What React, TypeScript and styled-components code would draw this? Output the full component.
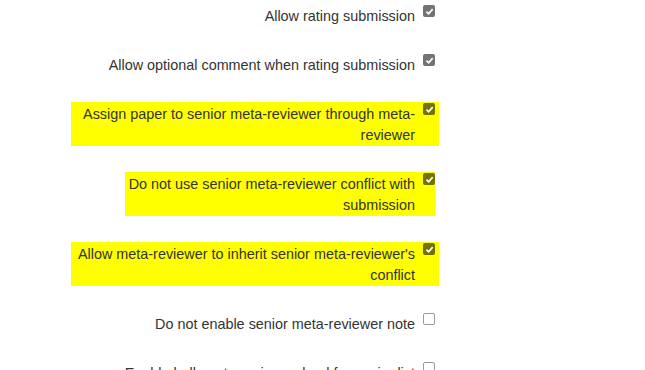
import React from 'react';
import styled, { createGlobalStyle } from 'styled-components';

const GlobalStyle = createGlobalStyle`
  body {
    margin: 0;
    background: #fff;
    font-family: 'Liberation Sans', Arial, sans-serif;
  }
`;

const Settings = styled.div`
  width: 439px;
  padding-top: 4px;
  display: flex;
  flex-direction: column;
  align-items: flex-end;
  gap: 26px;
`;

const Field = styled.label<{ $highlight?: boolean; $tight?: boolean }>`
  display: flex;
  align-items: flex-start;
  max-width: 364px;
  padding-right: ${(p) => (p.$tight ? '0' : '4px')};
  margin-right: ${(p) => (p.$tight ? '4px' : '0')};
  background: ${(p) => (p.$highlight ? '#ffff00' : 'transparent')};
`;

const Label = styled.span`
  padding-top: 2px;
  font-size: 14.4px;
  line-height: 21px;
  color: #333;
  text-align: right;
`;

const Box = styled.span<{ $checked?: boolean }>`
  flex: none;
  width: 12px;
  height: 12px;
  margin: 1px 0 0 8px;
  box-sizing: border-box;
  border-radius: 2px;
  display: flex;
  align-items: center;
  justify-content: center;
  background: ${(p) => (p.$checked ? 'rgba(0, 0, 0, 0.55)' : '#fff')};
  border: 1px solid ${(p) => (p.$checked ? 'transparent' : '#9a9a9a')};
`;

const CheckMark = () => (
  <svg width="9" height="9" viewBox="0 0 10 10">
    <path d="M1.6 5.2 L4 7.5 L8.5 2.4" fill="none" stroke="#fff" strokeWidth="1.9" />
  </svg>
);

type Option = { text: string; checked: boolean; highlight?: boolean; tight?: boolean };

const options: Option[] = [
  { text: 'Allow rating submission', checked: true },
  { text: 'Allow optional comment when rating submission', checked: true },
  { text: 'Assign paper to senior meta-reviewer through meta-reviewer', checked: true, highlight: true },
  { text: 'Do not use senior meta-reviewer conflict with submission', checked: true, highlight: true, tight: true },
  { text: "Allow meta-reviewer to inherit senior meta-reviewer's conflict", checked: true, highlight: true },
  { text: 'Do not enable senior meta-reviewer note', checked: false },
  { text: 'Enable bulk meta-review upload for senior list', checked: false },
];

const App: React.FC = () => {
  return (
    <>
      <GlobalStyle />
      <Settings>
        {options.map((o) => (
          <Field key={o.text} $highlight={o.highlight} $tight={o.tight} style={o.tight ? { width: 310 } : undefined}>
            <Label>{o.text}</Label>
            <Box $checked={o.checked}>{o.checked && <CheckMark />}</Box>
          </Field>
        ))}
      </Settings>
    </>
  );
};

export default App;
